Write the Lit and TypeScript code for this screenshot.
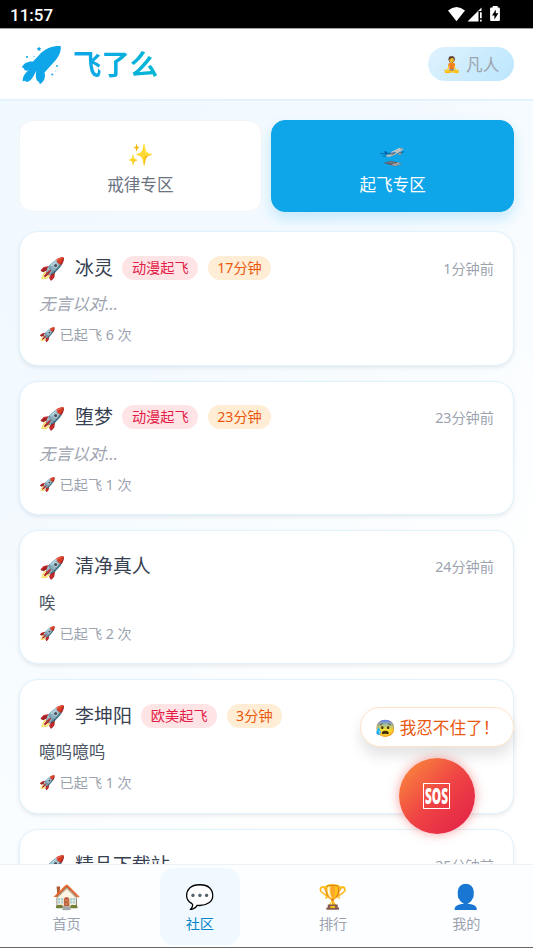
import { LitElement, html, css, nothing } from "lit";
import { customElement, property } from "lit/decorators.js";

interface Post {
  name: string;
  tags: string[];
  time: string;
  text: string;
  empty?: boolean;
  count: number;
}

const POSTS: Post[] = [
  { name: "冰灵", tags: ["动漫起飞", "17分钟"], time: "1分钟前", text: "无言以对...", empty: true, count: 6 },
  { name: "堕梦", tags: ["动漫起飞", "23分钟"], time: "23分钟前", text: "无言以对...", empty: true, count: 1 },
  { name: "清净真人", tags: [], time: "24分钟前", text: "唉", count: 2 },
  { name: "李坤阳", tags: ["欧美起飞", "3分钟"], time: "25分钟前", text: "噫呜噫呜", count: 1 },
  { name: "精品下载站", tags: [], time: "25分钟前", text: "唉", count: 1 },
];

@customElement("post-card")
class PostCard extends LitElement {
  @property({ attribute: false }) post!: Post;

  static styles = css`
    :host {
      display: block;
      flex: none;
      box-sizing: border-box;
      height: 134.3px;
      padding: 19px;
      background: #fff;
      border: 1px solid #dff2fe;
      border-radius: 19px;
      box-shadow: 0 2px 4px rgba(0, 0, 0, 0.08);
      white-space: nowrap;
    }
    .head { display: flex; align-items: center; height: 33px; }
    .avatar { width: 36px; font-size: 21.3px; line-height: 33px; }
    .name { font-size: 18.95px; line-height: 28px; color: #374151; margin-right: 9.5px; }
    .tag {
      height: 24px;
      line-height: 24px;
      padding: 0 9.5px;
      margin-right: 9.5px;
      border-radius: 12px;
      font-size: 14.2px;
      color: #e11d48;
      background: #ffe4e6;
    }
    .tag.mins { color: #ea580c; background: #ffedd5; }
    .time { margin-left: auto; font-size: 14.2px; color: #9ca3af; }
    .text { margin-top: 8px; font-size: 16.6px; line-height: 24px; color: #4b5563; }
    .text.empty { color: #9ca3af; font-style: italic; }
    .foot { display: flex; margin-top: 9px; font-size: 14.2px; line-height: 19px; color: #9ca3af; }
    .mini { width: 20.5px; font-size: 13.4px; }
  `;

  render() {
    const p = this.post;
    return html`
      <div class="head">
        <span class="avatar">🚀</span><span class="name">${p.name}</span>
        ${p.tags.length
          ? html`<span class="tag">${p.tags[0]}</span><span class="tag mins">${p.tags[1]}</span>`
          : nothing}
        <span class="time">${p.time}</span>
      </div>
      <div class="text ${p.empty ? "empty" : ""}">${p.text}</div>
      <div class="foot"><span class="mini">🚀</span><span>已起飞 ${p.count} 次</span></div>
    `;
  }
}

@customElement("app-root")
class AppRoot extends LitElement {
  static styles = css`
    :host {
      display: flex;
      flex-direction: column;
      position: relative;
      width: 533px;
      height: 948px;
      overflow: hidden;
      box-sizing: border-box;
      font-family: "Noto Sans", "Noto Sans CJK SC", "Noto Color Emoji", sans-serif;
      font-weight: 400;
      background: linear-gradient(135deg, #f0f9ff 0%, #f3faff 35%, #fff 75%);
      border-bottom: 1px solid #666;
    }
    .status {
      flex: none;
      display: flex;
      align-items: center;
      height: 28px;
      padding: 0 32px 0 10px;
      background: #000;
      color: #fff;
      font: 500 17px/28px Roboto, sans-serif;
      box-sizing: border-box;
    }
    .clock { flex: 1; padding-top: 2px; }
    .header {
      flex: none;
      display: flex;
      align-items: center;
      box-sizing: border-box;
      height: 73px;
      padding: 0 19px;
      background: #fff;
      border-top: 1px solid #a3a3a3;
      border-bottom: 2px solid #e3f3fd;
    }
    .logo { display: block; width: 44px; height: 44px; }
    .title {
      margin-left: 10px;
      font-size: 28.4px;
      font-weight: 700;
      line-height: 40px;
      color: transparent;
      background: linear-gradient(90deg, #0ea5e9, #06b6d4);
      -webkit-background-clip: text;
      background-clip: text;
    }
    .rank {
      display: flex;
      align-items: center;
      justify-content: center;
      margin-left: auto;
      width: 86px;
      height: 34px;
      border-radius: 17px;
      background: linear-gradient(135deg, #e0f2fe, #bae6fd);
      color: #9ca3af;
      font-size: 16.6px;
      gap: 4px;
    }
    .rank .e { font-size: 15.5px; }
    .main {
      flex: 1;
      min-height: 0;
      overflow: hidden;
      display: flex;
      flex-direction: column;
      padding: 19px 19px 0;
    }
    .tabs { flex: none; display: flex; gap: 9.5px; height: 92px; }
    .tab {
      flex: 1;
      display: flex;
      flex-direction: column;
      align-items: center;
      box-sizing: border-box;
      padding-top: 17px;
      border-radius: 14px;
      background: #fff;
      border: 1px solid #f3f4f6;
      color: #6b7280;
      font-size: 16.6px;
    }
    .tab.on {
      background: #0ea5e9;
      border-color: #0ea5e9;
      color: #fff;
      box-shadow: 0 7px 14px rgba(14, 165, 233, 0.2);
    }
    .tab .e { font-size: 21.3px; line-height: 32px; height: 34px; }
    .tab .l { line-height: 26px; }
    .list { display: flex; flex-direction: column; gap: 15px; margin-top: 19.4px; }
    .nav {
      flex: none;
      box-sizing: border-box;
      display: flex;
      justify-content: space-around;
      height: 83px;
      padding-top: 3px;
      background: #fdfeff;
      border-top: 1px solid #eef0f3;
    }
    .item {
      width: 80px;
      height: 77px;
      border-radius: 14px;
      display: flex;
      flex-direction: column;
      align-items: center;
      font-size: 14.2px;
      color: #9ca3af;
    }
    .item .e { margin-top: 11px; font-size: 23.7px; line-height: 34px; height: 34px; }
    .item .l { line-height: 22px; }
    .item.on { background: #f0f9ff; color: #0284c7; }
    .bubble {
      position: absolute;
      left: 360px;
      top: 707px;
      width: 154px;
      height: 40px;
      box-sizing: border-box;
      display: flex;
      align-items: center;
      padding-left: 14px;
      gap: 4px;
      border: 1px solid #ffe4c7;
      border-radius: 20px;
      background: #fff;
      color: #ea580c;
      font-size: 16.6px;
      white-space: nowrap;
      box-shadow: 0 9px 14px rgba(0, 0, 0, 0.11);
    }
    .sos {
      position: absolute;
      left: 398.5px;
      top: 758px;
      width: 76px;
      height: 76px;
      border-radius: 50%;
      background: linear-gradient(135deg, #fb923c 0%, #ef4444 50%, #e11d48 100%);
      box-shadow: 0 0 11px rgba(239, 68, 68, 0.5);
      display: flex;
      align-items: center;
      justify-content: center;
    }
    .box {
      box-sizing: border-box;
      width: 27px;
      height: 26px;
      border: 1px solid #fff;
      display: flex;
      align-items: center;
      justify-content: center;
    }
    .box svg { display: block; }
    .sosText { font-family: "Open Sans", "Noto Sans", sans-serif; font-weight: 800; font-size: 22px; fill: #fff; }
  `;

  render() {
    const nav = [["🏠", "首页"], ["💬", "社区"], ["🏆", "排行"], ["👤", "我的"]];
    return html`
      <div class="status">
        <span class="clock">11:57</span>
        <svg width="54" height="18" viewBox="447 5 54 18" fill="#fff">
          <path d="M448 10.5Q456.5 3.500 465 10.500L456.500 21.300Z" />
          <path d="M467.500 21.500L481.500 7.500V11H478.500V21.500Z" />
          <path d="M480 12.200h1.700v6h-1.700zM480 19.800h1.700v1.700h-1.700z" />
          <path fill-rule="evenodd" d="M492.700 6h5v1.600h1.200q1 0 1 1V20q0 1-1 1h-7.800q-1 0-1-1V8.600q0-1 1-1h1.600zM495.800 9.500l-3.800 6h2.400v4l4-6.200h-2.600z" />
        </svg>
      </div>
      <div class="header">
        <svg class="logo" viewBox="19 43 44 44" fill="#0ea5e9">
          <path d="M60.700 47.200C54 46.500 46.500 49.200 41 54L33 62.600C27.500 62.300 22.800 64.500 22 69Q24.300 68.200 24.500 71C27 72.500 29 71 30 70C26 73 22 77.500 22.800 82.600Q25 80.500 26.500 83C29 83 31.500 80.500 33 78L36.500 71.500C35.500 75.500 35.500 80 37.500 82Q39.500 82.500 39.800 85.200C44 83 46 78 44.500 73.500L54 63C58.500 58.500 61.500 52 60.700 47.200Z" />
          <path d="M39 47.500l.8 1.400 1.500.4-1.100 1 .2 1.600-1.400-.7-1.400.7.200-1.600-1.100-1 1.500-.4z" />
          <circle cx="27" cy="58" r="1" /><circle cx="34" cy="57.500" r=".5" />
          <circle cx="57" cy="67" r=".9" /><circle cx="52.300" cy="75.500" r="1" /><circle cx="55.500" cy="72" r=".4" />
        </svg>
        <span class="title">飞了么</span>
        <div class="rank"><span class="e">🧘</span><span>凡人</span></div>
      </div>
      <div class="main">
        <div class="tabs">
          <div class="tab"><span class="e">✨</span><span class="l">戒律专区</span></div>
          <div class="tab on"><span class="e">🛫</span><span class="l">起飞专区</span></div>
        </div>
        <div class="list">${POSTS.map((p) => html`<post-card .post=${p}></post-card>`)}</div>
      </div>
      <div class="nav">
        ${nav.map(([e, l], i) => html`<div class="item ${i === 1 ? "on" : ""}"><span class="e">${e}</span><span class="l">${l}</span></div>`)}
      </div>
      <div class="bubble"><span class="e">😰</span><span>我忍不住了！</span></div>
      <div class="sos">
        <div class="box">
          <svg width="25" height="24" viewBox="0 0 25 24">
            <text class="sosText" x="1" y="20" textLength="23" lengthAdjust="spacingAndGlyphs">SOS</text>
          </svg>
        </div>
      </div>
    `;
  }
}
